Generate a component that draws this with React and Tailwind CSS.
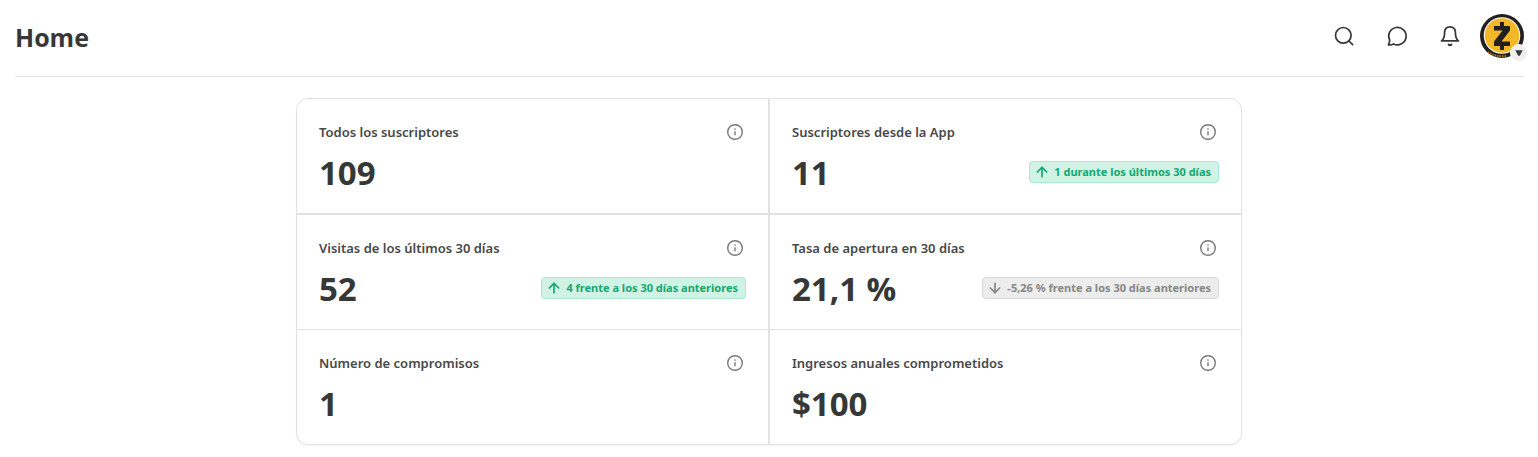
import { ArrowDown, ArrowUp } from "lucide-react";

const stats = [
  { label: "Todos los suscriptores", value: "109" },
  {
    label: "Suscriptores desde la App",
    value: "11",
    trend: "up",
    change: "1 durante los últimos 30 días",
  },
  {
    label: "Visitas de los últimos 30 días",
    value: "52",
    trend: "up",
    change: "4 frente a los 30 días anteriores",
  },
  {
    label: "Tasa de apertura en 30 días",
    value: "21,1 %",
    trend: "down",
    change: "-5,26 % frente a los 30 días anteriores",
  },
  { label: "Número de compromisos", value: "1" },
  { label: "Ingresos anuales comprometidos", value: "$100" },
];

function SearchIcon() {
  return (
    <svg width="24" height="24" viewBox="0 0 24 24" fill="none" stroke="currentColor" strokeWidth="1.7" strokeLinecap="round" strokeLinejoin="round">
      <circle cx="11.3" cy="11.3" r="7.8" />
      <path d="M17 17l3.6 3.6" />
    </svg>
  );
}

function ChatIcon() {
  return (
    <svg width="24" height="24" viewBox="0 0 24 24" fill="none" stroke="currentColor" strokeWidth="1.7" strokeLinecap="round" strokeLinejoin="round">
      <path d="M4.7 16.1A8.7 8.7 0 1 1 8.6 19.9C7.2 20.6 5.3 21 3.4 20.8C4.2 19.4 4.6 17.8 4.7 16.1Z" />
    </svg>
  );
}

function BellIcon() {
  return (
    <svg width="24" height="24" viewBox="0 0 24 24" fill="none" stroke="currentColor" strokeWidth="1.7" strokeLinecap="round" strokeLinejoin="round">
      <path d="M3.5 16.9C5.6 15.6 6.6 13 6.6 8.6C6.6 5 8.6 2.9 12 2.9S17.4 5 17.4 8.6C17.4 13 18.4 15.6 20.5 16.9Z" />
      <path d="M10.6 20.6C11.4 21.2 12.6 21.2 13.4 20.6" strokeWidth="2" />
    </svg>
  );
}

function InfoIcon() {
  return (
    <svg width="20" height="20" viewBox="0 0 20 20" fill="none" stroke="currentColor">
      <circle cx="10" cy="10" r="7.3" strokeWidth="1.4" />
      <path d="M10 9.3v4" strokeWidth="1.4" />
      <circle cx="10" cy="7.1" r="0.8" fill="currentColor" stroke="none" />
    </svg>
  );
}

function Avatar() {
  return (
    <svg width="44" height="44" viewBox="0 0 44 44">
      <circle cx="22" cy="22" r="22" fill="#231f20" />
      <circle cx="22" cy="21.5" r="18.3" fill="#fff" />
      <circle cx="22" cy="21.5" r="17.3" fill="#f4b728" />
      <path d="M20 8h4v4h6v4.500l-8.500 11H30V32h-6v4h-4v-4h-6v-4.500l8.500-11H14V12h6z" fill="#231f20" />
      <path d="M8 38Q15 43 26 42" fill="none" stroke="#a87d22" strokeWidth="2" strokeDasharray="1.5 1" />
    </svg>
  );
}

function HeaderButton({ label, children }) {
  return (
    <button type="button" aria-label={label} className="flex size-10 items-center justify-center rounded-lg text-[#363737]">
      {children}
    </button>
  );
}

function TrendBadge({ trend, children }) {
  const up = trend === "up";
  const Arrow = up ? ArrowUp : ArrowDown;
  return (
    <span
      className={
        up
          ? "mb-0.5 flex items-center gap-1 rounded border border-[#a8ead0] bg-[#d0f3e5] pr-[7px] pl-1 font-['Noto_Sans',sans-serif] text-[11px] leading-5 font-bold text-[#12a870]"
          : "mb-0.5 flex items-center gap-1 rounded border border-[#d6d6d6] bg-[#ededed] pr-[7px] pl-1 font-['Noto_Sans',sans-serif] text-[11px] leading-5 font-bold text-[#868787]"
      }
    >
      <Arrow size={16} strokeWidth={2.5} />
      {children}
    </span>
  );
}

function StatCard({ label, value, trend, change }) {
  return (
    <article className="border-[#e2e2e2] bg-white px-[22px] pt-[21px] pb-[18px] nth-[-n+2]:border-b">
      <div className="flex items-center justify-between pr-px">
        <h2 className="font-['Noto_Sans',sans-serif] text-[13px] leading-6 font-semibold text-[#474848]">{label}</h2>
        <button type="button" aria-label={`Información: ${label}`} className="text-[#777878]">
          <InfoIcon />
        </button>
      </div>
      <div className="mt-[7px] flex items-center justify-between">
        <p className="text-[33px] leading-[44px] font-bold text-[#363737]">{value}</p>
        {change && <TrendBadge trend={trend}>{change}</TrendBadge>}
      </div>
    </article>
  );
}

export default function App() {
  return (
    <div className="min-h-screen bg-white px-[15px] pb-3 font-['Open_Sans','Noto_Sans',sans-serif] text-[#363737]">
      <header className="-mr-px flex items-center justify-between border-b border-[#e4e4e4] pt-[14px] pb-[18px]">
        <h1 className="pt-0.5 text-[25px] leading-[42px] font-bold">Home</h1>
        <div className="flex items-center">
          <nav className="mr-[10px] flex gap-[13px]">
            <HeaderButton label="Buscar">
              <SearchIcon />
            </HeaderButton>
            <HeaderButton label="Mensajes">
              <ChatIcon />
            </HeaderButton>
            <HeaderButton label="Notificaciones">
              <BellIcon />
            </HeaderButton>
          </nav>
          <button type="button" aria-label="Cuenta" className="relative size-11">
            <Avatar />
            <span className="absolute -right-[3px] -bottom-[3px] flex size-4 items-center justify-center rounded-full bg-[#eeeeee] ring-1 ring-white">
              <svg width="8" height="6" viewBox="0 0 8 6" fill="currentColor">
                <path d="M0.3 0.3h7.400L4.800 5.700H3.200z" />
              </svg>
            </span>
          </button>
        </div>
      </header>

      <main className="mx-auto mt-[21px] max-w-[946px]">
        <section className="grid grid-cols-2 gap-x-[2px] gap-y-px overflow-hidden rounded-xl border border-[#e2e2e2] bg-[#e2e2e2] shadow-xs">
          {stats.map((stat) => (
            <StatCard key={stat.label} {...stat} />
          ))}
        </section>
      </main>
    </div>
  );
}
